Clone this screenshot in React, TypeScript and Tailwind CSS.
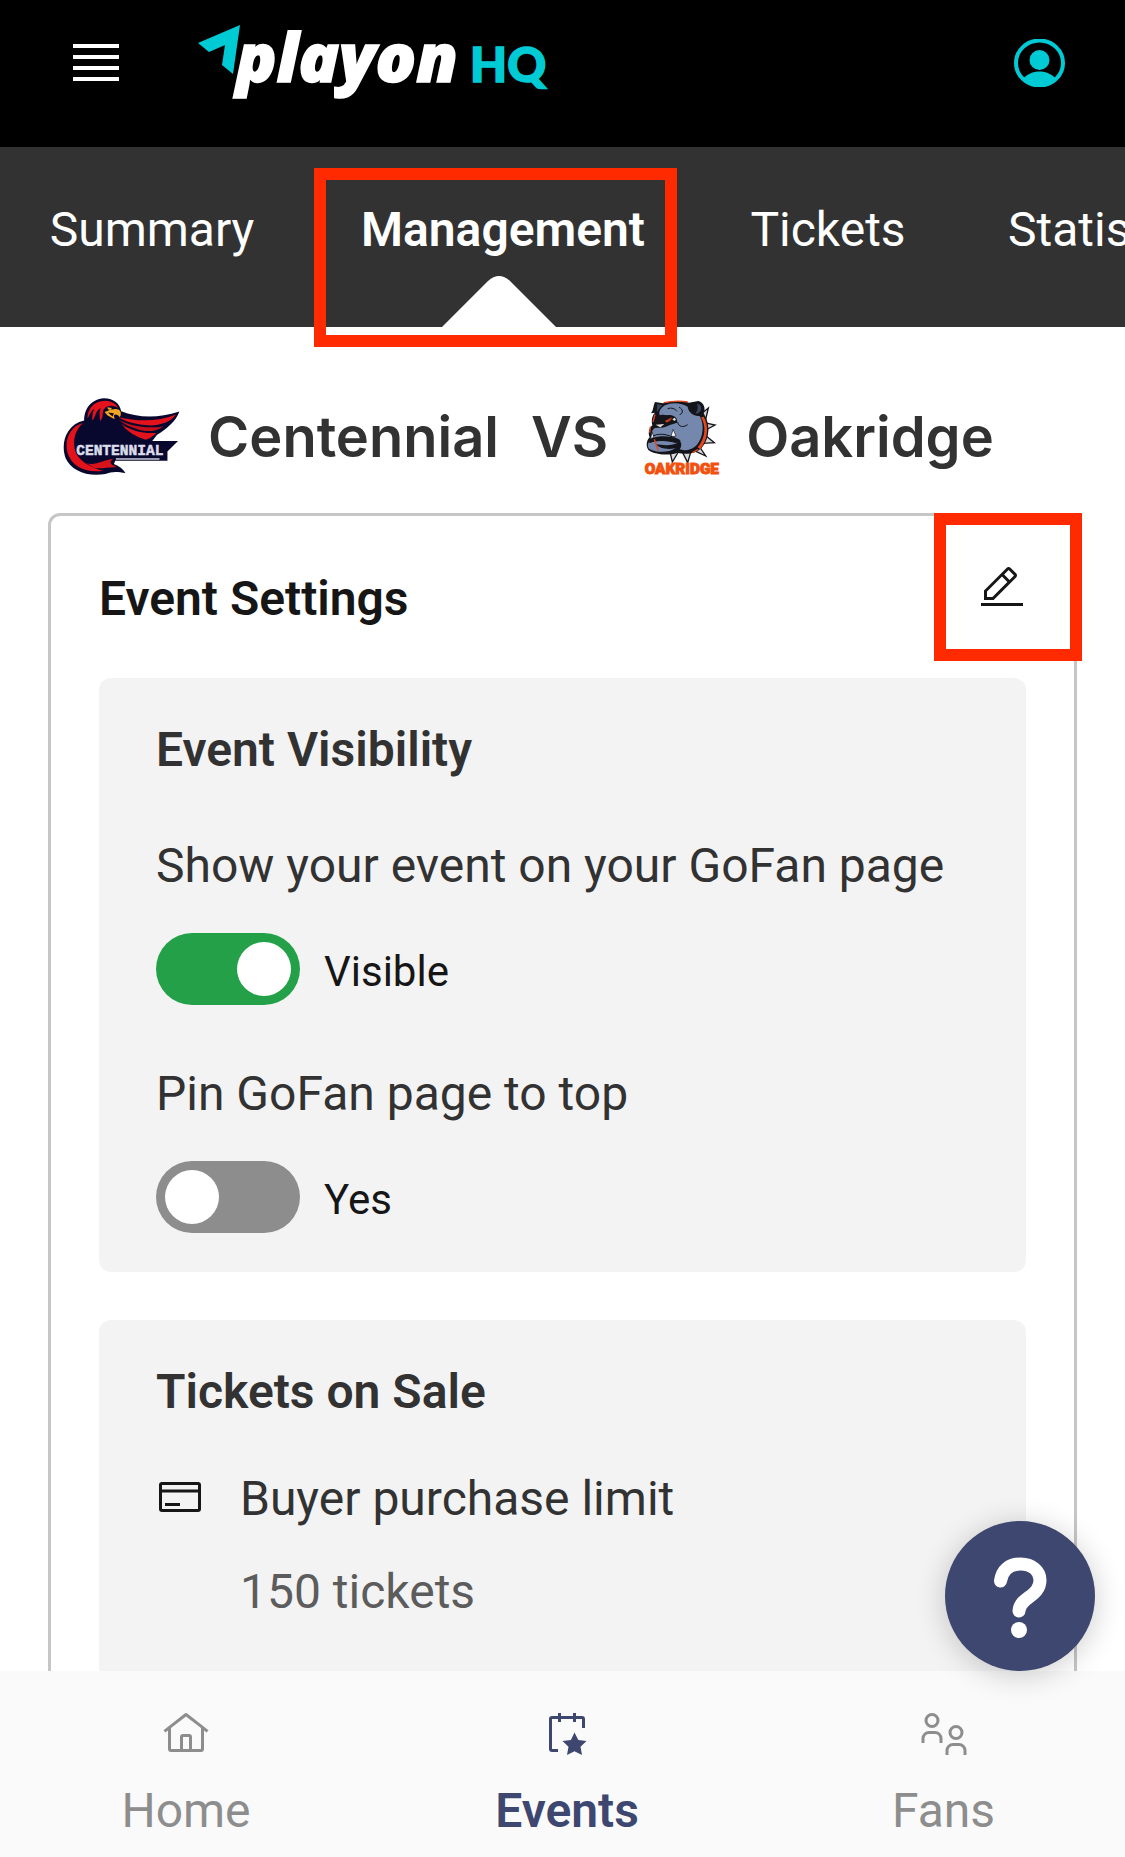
import { useState } from "react";
import type { ReactNode } from "react";

function BrandLogo() {
  return (
    <svg viewBox="0 0 360 90" className="h-[90px] w-[360px] overflow-visible" role="img" aria-label="playon HQ">
      <path d="M0 25 L42 7 L35 56 L24 47 L27 27 L11 34 Z" fill="#00cbd5" />
      <text x="38" y="64" fontFamily="'Open Sans', sans-serif" fontWeight="800" fontStyle="italic" fontSize="67" fill="#fff" stroke="#fff" strokeWidth="1.500">
        playon
      </text>
      <text x="272" y="64" fontFamily="Lato, sans-serif" fontWeight="900" fontSize="48" fill="#00cbd5" stroke="#00cbd5" strokeWidth="1.500">
        HQ
      </text>
    </svg>
  );
}

function AvatarIcon() {
  return (
    <svg viewBox="0 0 51 48" className="h-12 w-[51px]" aria-hidden="true">
      <ellipse cx="25.500" cy="24" rx="23.500" ry="22.500" fill="none" stroke="#00cbd5" strokeWidth="4" />
      <circle cx="25.500" cy="21" r="10" fill="#00cbd5" />
      <path d="M9 40 C13 35 19 32.500 25.500 32.500 C32 32.500 38 35 42 40 C37 45.500 31 48 25.500 48 C20 48 14 45.500 9 40 Z" fill="#00cbd5" />
    </svg>
  );
}

function CentennialLogo() {
  return (
    <svg viewBox="68 54 354 236" className="h-[78px] w-[117px] shrink-0" role="img" aria-label="Centennial logo">
      <path
        d="M132 122 C132 90 150 58 192 55 C222 55 240 72 244 94 C290 112 350 118 420 95 C412 122 380 150 352 166 L338 184 L416 184 L384 216 L384 244 L226 244 L222 254 C238 260 250 270 257 281 C232 276 214 276 196 284 C140 294 92 272 76 236 C60 194 76 134 132 122 Z"
        fill="#08082e"
      />
      <path d="M128 130 C84 142 68 192 86 230 C100 262 140 282 190 274 C166 270 122 250 108 222 C94 188 104 152 128 130 Z" fill="#e4121b" />
      <path d="M138 250 C160 262 190 242 220 238 C206 250 210 254 232 264 C210 260 180 272 160 264 Z" fill="#d8121b" />
      <path d="M142 116 C142 88 160 62 196 62 C216 62 232 74 234 84 C218 74 200 76 190 90 C186 104 192 110 180 124 C180 108 176 98 182 84 C164 94 168 112 156 122 C158 106 156 98 164 86 C150 94 150 106 142 116 Z" fill="#e4121b" />
      <path d="M236 112 C290 124 350 128 410 104 C392 130 352 140 318 136 C284 132 258 126 236 112 Z" fill="#e4121b" />
      <path d="M236 120 C266 138 320 148 372 140 C350 156 318 158 292 148 C270 142 252 134 236 120 Z" fill="#c40f18" />
      <path d="M244 132 C270 152 306 162 350 160 C338 172 330 178 318 180 C290 172 262 156 244 132 Z" fill="#e4121b" />
      <path d="M194 96 C206 92 212 88 222 88 C240 84 248 98 240 112 C234 104 228 102 222 106 L224 118 L202 106 Z" fill="#f6a623" />
      <path d="M204 98 L222 100 L218 110 Z" fill="#08082e" />
      <path d="M202 82 L216 84 L212 90 L204 88 Z" fill="#f6a623" />
      <rect x="228" y="236" width="132" height="5" fill="#b9bac9" />
      <text x="108" y="226" fontFamily="'Liberation Mono', monospace" fontWeight="700" fontSize="44" fill="#dcdcea" stroke="#dcdcea" strokeWidth="1.500">
        CENTENNIAL
      </text>
    </svg>
  );
}

function OakridgeLogo() {
  return (
    <svg viewBox="133 58 222 225" className="h-[75px] w-[74px] shrink-0 overflow-visible" role="img" aria-label="Oakridge logo">
      <g fill="#d9d9dc" stroke="#17171c" strokeWidth="4">
        <path d="M300 104 L326 82 L318 116 Z" />
        <path d="M314 126 L346 133 L318 148 Z" />
        <path d="M312 160 L344 186 L308 188 Z" />
        <path d="M294 190 L318 226 L284 210 Z" />
        <path d="M248 214 L274 212 L264 246 Z" />
        <path d="M212 218 L236 214 L218 244 Z" />
      </g>
      <path
        d="M166 64 L190 68 C210 60 250 60 268 66 L296 61 C314 66 318 84 312 98 C332 130 332 172 306 202 C284 224 252 220 234 216 C204 226 164 222 146 208 C138 196 140 180 150 170 C145 158 147 144 158 134 C154 118 158 104 166 96 L154 98 C162 88 160 76 166 64 Z"
        fill="#14151b"
      />
      <path d="M312 108 C328 134 326 174 302 206 L294 200 C318 172 320 136 304 110 Z" fill="#e2481c" />
      <path
        d="M196 74 C216 64 246 66 264 78 C266 96 282 106 300 106 C314 130 312 168 292 192 C272 212 250 210 240 206 C248 196 246 184 236 176 C214 166 182 164 160 172 C154 160 156 148 166 142 L194 140 C204 134 216 132 232 126 C236 114 222 100 204 104 C194 104 186 100 180 104 C176 92 184 82 196 74 Z"
        fill="#7488ad"
      />
      <path d="M146 186 C170 178 206 178 234 186 C222 194 196 196 168 190 C180 204 206 208 228 202 C206 218 166 216 148 204 C144 198 144 192 146 186 Z" fill="#7488ad" />
      <path d="M172 70 L188 74 C180 82 176 88 172 94 C170 88 174 80 172 70 Z" fill="#3b465f" />
      <path d="M292 70 C300 70 306 76 304 88 C300 96 294 100 288 98 C294 90 296 80 292 70 Z" fill="#3b465f" />
      <path d="M184 106 C196 102 214 104 226 112 L212 118 L206 128 L186 124 L172 116 Z" fill="#14151b" />
      <path d="M196 120 L218 110 L212 120 L200 126 Z" fill="#c23c18" />
      <circle cx="224" cy="116" r="5" fill="#f2f2f2" stroke="#14151b" strokeWidth="2" />
      <path d="M164 126 L200 126 L192 140 L170 140 Z" fill="#14151b" />
      <path d="M168 132 L194 130 L182 140 Z" fill="#eadfd8" />
      <path d="M214 168 L220 146 L229 166 Z" fill="#fff" stroke="#14151b" strokeWidth="2" />
      <path d="M153 174 L157 154 L163 170 Z" fill="#fff" stroke="#14151b" strokeWidth="2" />
      <g fill="none" stroke="#14151b" strokeWidth="3">
        <path d="M234 124 C236 138 250 142 264 132 M238 80 C250 84 252 98 240 102 M204 84 C216 80 226 84 232 92" />
        <path d="M160 166 C186 154 212 164 242 180 M150 186 C170 176 212 178 240 190" />
      </g>
      <path d="M192 66 C220 60 244 60 264 64 M164 176 L176 210 M166 102 L160 124 M278 216 L296 206 M152 138 L150 156" fill="none" stroke="#e2481c" strokeWidth="4" />
      <text x="135" y="279" fontFamily="Roboto, sans-serif" fontWeight="900" fontSize="46" fill="#f2500f" stroke="#f2500f" strokeWidth="3">
        OAKRIDGE
      </text>
    </svg>
  );
}

function Icon({ children }: { children: ReactNode }) {
  return (
    <svg viewBox="0 0 32 32" className="size-12 shrink-0" fill="currentColor" aria-hidden="true">
      {children}
    </svg>
  );
}

function EditIcon() {
  return (
    <Icon>
      <path d="M2 26H30V28H2z" />
      <path d="M25.400 9c.8-.8.8-2 0-2.800l-3.600-3.600c-.8-.8-2-.8-2.800 0l-15 15V24h6.400L25.400 9zM20.400 4L24 7.600l-3 3L17.400 7 20.400 4zM6 22v-3.600l10-10 3.600 3.600-10 10H6z" />
    </Icon>
  );
}

function CardIcon() {
  return (
    <Icon>
      <path d="M28 6H4A2 2 0 0 0 2 8V24a2 2 0 0 0 2 2H28a2 2 0 0 0 2-2V8A2 2 0 0 0 28 6Zm0 2v3H4V8ZM4 24V13H28V24Z" />
      <path d="M6 20H16V22H6z" />
    </Icon>
  );
}

function HomeIcon() {
  return (
    <Icon>
      <path d="M16.612 2.214a1.010 1.010 0 0 0-1.243 0L1 13.419l1.243 1.572L4 13.621V26a2.004 2.004 0 0 0 2 2H26a2.004 2.004 0 0 0 2-2V13.630L29.757 15 31 13.428ZM18 26H14V18h4Zm2 0V18a2.002 2.002 0 0 0-2-2H14a2.002 2.002 0 0 0-2 2v8H6V12.062l10-7.790 10 7.800V26Z" />
    </Icon>
  );
}

function EventsIcon() {
  return (
    <Icon>
      <path d="M21 15l2.549 4.938L29 20.729l-4 3.844L26 30l-5-2.562L16 30l1-5.427-4-3.844 5.600-.791z" />
      <path d="M26 4h-4V2h-2v2h-8V2h-2v2H6a2 2 0 0 0-2 2v20a2 2 0 0 0 2 2h4v-2H6V6h4v2h2V6h8v2h2V6h4v6h2V6a2 2 0 0 0-2-2z" />
    </Icon>
  );
}

function FansIcon() {
  return (
    <Icon>
      <g fill="none" stroke="currentColor" strokeWidth="2">
        <circle cx="8" cy="7" r="4" />
        <path d="M2 22v-3a4 4 0 0 1 4-4h4a4 4 0 0 1 4 4v3" />
        <circle cx="24" cy="15" r="4" />
        <path d="M18 30v-3a4 4 0 0 1 4-4h4a4 4 0 0 1 4 4v3" />
      </g>
    </Icon>
  );
}

function Toggle({ id, title, label, initial }: { id: string; title: string; label: string; initial: boolean }) {
  const [on, setOn] = useState(initial);
  return (
    <div>
      <p id={`${id}-title`}>{title}</p>
      <div className="mt-[37px] flex items-center gap-6">
        <input
          id={id}
          type="checkbox"
          role="switch"
          aria-describedby={`${id}-title`}
          checked={on}
          onChange={(e) => setOn(e.target.checked)}
          className="flex h-[72px] w-36 shrink-0 cursor-pointer appearance-none items-center rounded-full bg-[#8d8d8d] px-[9px] before:size-[54px] before:rounded-full before:bg-white checked:justify-end checked:bg-[#24a148]"
        />
        <label htmlFor={id} className="pt-1.5 text-[42px] leading-[60px] text-[#161616]">
          {label}
        </label>
      </div>
    </div>
  );
}

export default function App() {
  return (
    <div className="relative flex h-screen flex-col overflow-hidden bg-white font-[Roboto,sans-serif] text-[48px] leading-[60px] text-[#323232]">
      <header className="flex h-[147px] shrink-0 items-start bg-black pr-[60px] pl-[73px]">
        <button type="button" aria-label="Open menu" className="mt-11 flex w-[46px] flex-col gap-[7px]">
          <span className="h-1 bg-white" />
          <span className="h-1 bg-white" />
          <span className="h-1 bg-white" />
          <span className="h-1 bg-white" />
        </button>
        <a href="#home" className="mt-[18px] ml-[79px]">
          <BrandLogo />
        </a>
        <button type="button" aria-label="Account" className="mt-[39px] ml-auto">
          <AvatarIcon />
        </button>
      </header>

      <nav aria-label="Event sections" className="relative z-10 flex h-[180px] shrink-0 gap-[102px] bg-[#323232] pl-12 text-center text-white">
        <a href="#summary" className="w-[208px] shrink-0 pt-[53px]">
          Summary
        </a>
        <a href="#management" aria-current="page" className="relative w-[290px] shrink-0 pt-[53px] font-semibold">
          Management
          <svg viewBox="0 0 114 51" className="absolute bottom-0 left-[84px] h-[51px] w-[114px]" aria-hidden="true">
            <path d="M0 51 L46 5 Q57 -5 68 5 L114 51 Z" fill="#fff" />
          </svg>
          <span className="absolute top-[21px] left-[-44px] h-[179px] w-[363px] border-12 border-[#ff2a00]" />
        </a>
        <a href="#tickets" className="w-[156px] shrink-0 pt-[53px]">
          Tickets
        </a>
        <a href="#statistics" className="shrink-0 pt-[53px]">
          Statistics
        </a>
      </nav>

      <main className="min-h-0 flex-1 overflow-hidden px-12">
        <h1 className="flex items-center pt-[71px] pb-[37px] pl-[15px] font-[Inter,sans-serif] text-[56px] font-semibold whitespace-nowrap">
          <CentennialLogo />
          <span className="ml-7">Centennial</span>
          <span className="ml-8">VS</span>
          <span className="ml-9 flex items-center gap-7">
            <OakridgeLogo />
            <span>Oakridge</span>
          </span>
        </h1>

        <section aria-labelledby="event-settings" className="rounded-xl border-3 border-[#c6c6c6] px-12 pb-12">
          <div className="flex items-start justify-between pt-12 pb-11">
            <h2 id="event-settings" className="leading-[70px] font-semibold text-[#161616]">
              Event Settings
            </h2>
            <button type="button" aria-label="Edit event settings" className="relative text-[#161616]">
              <EditIcon />
              <span className="absolute top-[-51px] left-[-44px] size-[148px] border-12 border-[#ff2a00]" />
            </button>
          </div>

          <div className="flex flex-col gap-12">
            <section className="rounded-xl bg-[#f3f3f3] px-[57px] pt-[42px] pb-[39px]">
              <h3 className="mb-14 font-semibold">Event Visibility</h3>
              <div className="flex flex-col gap-[59px]">
                <Toggle id="visible" title="Show your event on your GoFan page" label="Visible" initial={true} />
                <Toggle id="pinned" title="Pin GoFan page to top" label="Yes" initial={false} />
              </div>
            </section>

            <section className="rounded-xl bg-[#f3f3f3] px-[57px] pt-[42px] pb-24">
              <h3 className="mb-[47px] font-semibold">Tickets on Sale</h3>
              <div className="flex items-start gap-9">
                <span className="mt-1 text-[#161616]">
                  <CardIcon />
                </span>
                <dl>
                  <dt>Buyer purchase limit</dt>
                  <dd className="mt-[33px] text-[#5c5c5c]">150 tickets</dd>
                </dl>
              </div>
            </section>
          </div>
        </section>
      </main>

      <nav aria-label="Main" className="relative grid h-[186px] shrink-0 grid-cols-[372fr_390fr_363fr] bg-[#fafafa] text-[#8d8d8d]">
        <a href="#home" className="flex flex-col items-center gap-[23px] pt-[39px]">
          <HomeIcon />
          Home
        </a>
        <a href="#events" aria-current="page" className="flex flex-col items-center gap-[23px] pt-[39px] font-semibold text-[#3d4770]">
          <EventsIcon />
          Events
        </a>
        <a href="#fans" className="flex flex-col items-center gap-[23px] pt-[39px]">
          <FansIcon />
          Fans
        </a>
        <button type="button" aria-label="Help" className="absolute right-[30px] bottom-full size-[150px] rounded-full bg-[#3d4770] shadow-[0_4px_30px_rgba(0,0,0,0.2)]">
          <svg viewBox="0 0 150 150" className="size-full" aria-hidden="true">
            <path d="M55.500 60 C57 49 64 43 75.500 43 C87 43 95 50 95 59 C95 76 74.500 76 74 90" fill="none" stroke="#fff" strokeWidth="13" strokeLinecap="round" />
            <circle cx="74" cy="109" r="8" fill="#fff" />
          </svg>
        </button>
      </nav>
    </div>
  );
}
